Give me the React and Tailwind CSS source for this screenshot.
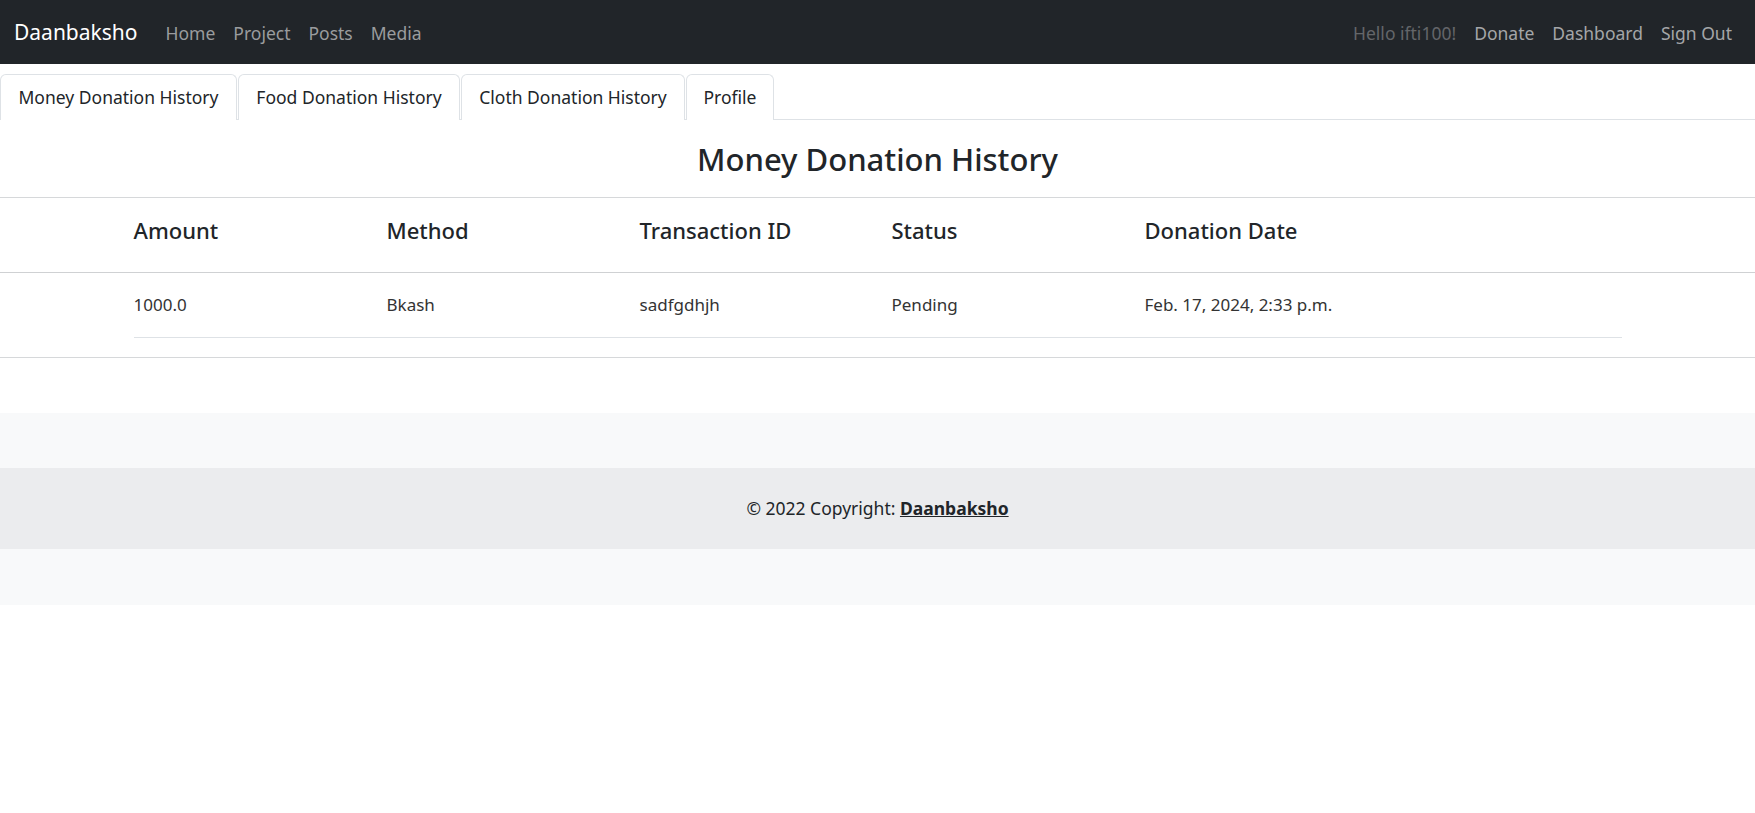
const leftLinks = ['Home', 'Project', 'Posts', 'Media'];
const rightLinks = ['Donate', 'Dashboard', 'Sign Out'];
const tabs = [
  { label: 'Money Donation History', width: 'w-[237px]' },
  { label: 'Food Donation History', width: 'w-[222px]' },
  { label: 'Cloth Donation History', width: 'w-[224px]' },
  { label: 'Profile', width: 'w-[88px]' },
];
const columns = ['Amount', 'Method', 'Transaction ID', 'Status', 'Donation Date'];
const donations = [
  {
    amount: '1000.0',
    method: 'Bkash',
    trxId: 'sadfgdhjh',
    status: 'Pending',
    date: 'Feb. 17, 2024, 2:33 p.m.',
  },
];

const rowGrid = 'grid grid-cols-[253px_253px_252px_253px_1fr]';

export default function App() {
  return (
    <div className="min-h-screen bg-white text-[#212529] font-['Noto_Sans',sans-serif]">
      <nav className="h-[64px] bg-[#212529] flex items-center justify-between pl-[14px] pr-[14px] pt-[2px]">
        <div className="flex items-center">
          <a className="text-white text-[21px] mr-[19px]">Daanbaksho</a>
          {leftLinks.map((link) => (
            <a key={link} className="px-[9px] text-[17.5px] text-[#9a9c9e]">
              {link}
            </a>
          ))}
        </div>
        <div className="flex items-center">
          <span className="px-[9px] text-[17.5px] text-[#646669]">Hello ifti100!</span>
          {rightLinks.map((link) => (
            <a key={link} className="px-[9px] text-[17.5px] text-[#a4a6a8]">
              {link}
            </a>
          ))}
        </div>
      </nav>

      <div className="mt-[10px] flex border-b border-[#dee2e6]">
        {tabs.map((tab) => (
          <button
            key={tab.label}
            className={`${tab.width} h-[46px] mr-px -mb-px bg-white border border-b-0 border-[#dee2e6] rounded-t-[6px] text-[17.5px] text-[#212529] text-center`}
          >
            {tab.label}
          </button>
        ))}
      </div>

      <h2 className="text-center text-[31px] font-medium leading-[43px] pt-[18px] pb-[16px]">
        Money Donation History
      </h2>

      <div className="border-t border-[#d6d8da]">
        <div className="border-b border-[#cfd1d3]">
          <div className={`${rowGrid} max-w-[1488px] mx-auto h-[74px] items-center pb-[10px]`}>
            {columns.map((col) => (
              <div key={col} className="text-[22px] font-medium">
                {col}
              </div>
            ))}
          </div>
        </div>
        <div className="max-w-[1488px] mx-auto">
          {donations.map((d) => (
            <div
              key={d.trxId}
              className={`${rowGrid} h-[65px] items-center border-b border-[#dee2e6] text-[17px] text-[#333]`}
            >
              <div>{d.amount}</div>
              <div>{d.method}</div>
              <div>{d.trxId}</div>
              <div>{d.status}</div>
              <div>{d.date}</div>
            </div>
          ))}
        </div>
      </div>
      <div className="mt-[19px] border-t border-[#d6d8da]" />

      <footer className="mt-[55px] bg-[#f8f9fa]">
        <div className="h-[55px]" />
        <div className="h-[81px] bg-[#ebecee] flex items-center justify-center text-[17.5px]">
          © 2022 Copyright:&nbsp;
          <a className="font-bold underline text-[#212529]">Daanbaksho</a>
        </div>
        <div className="h-[56px]" />
      </footer>
    </div>
  );
}
